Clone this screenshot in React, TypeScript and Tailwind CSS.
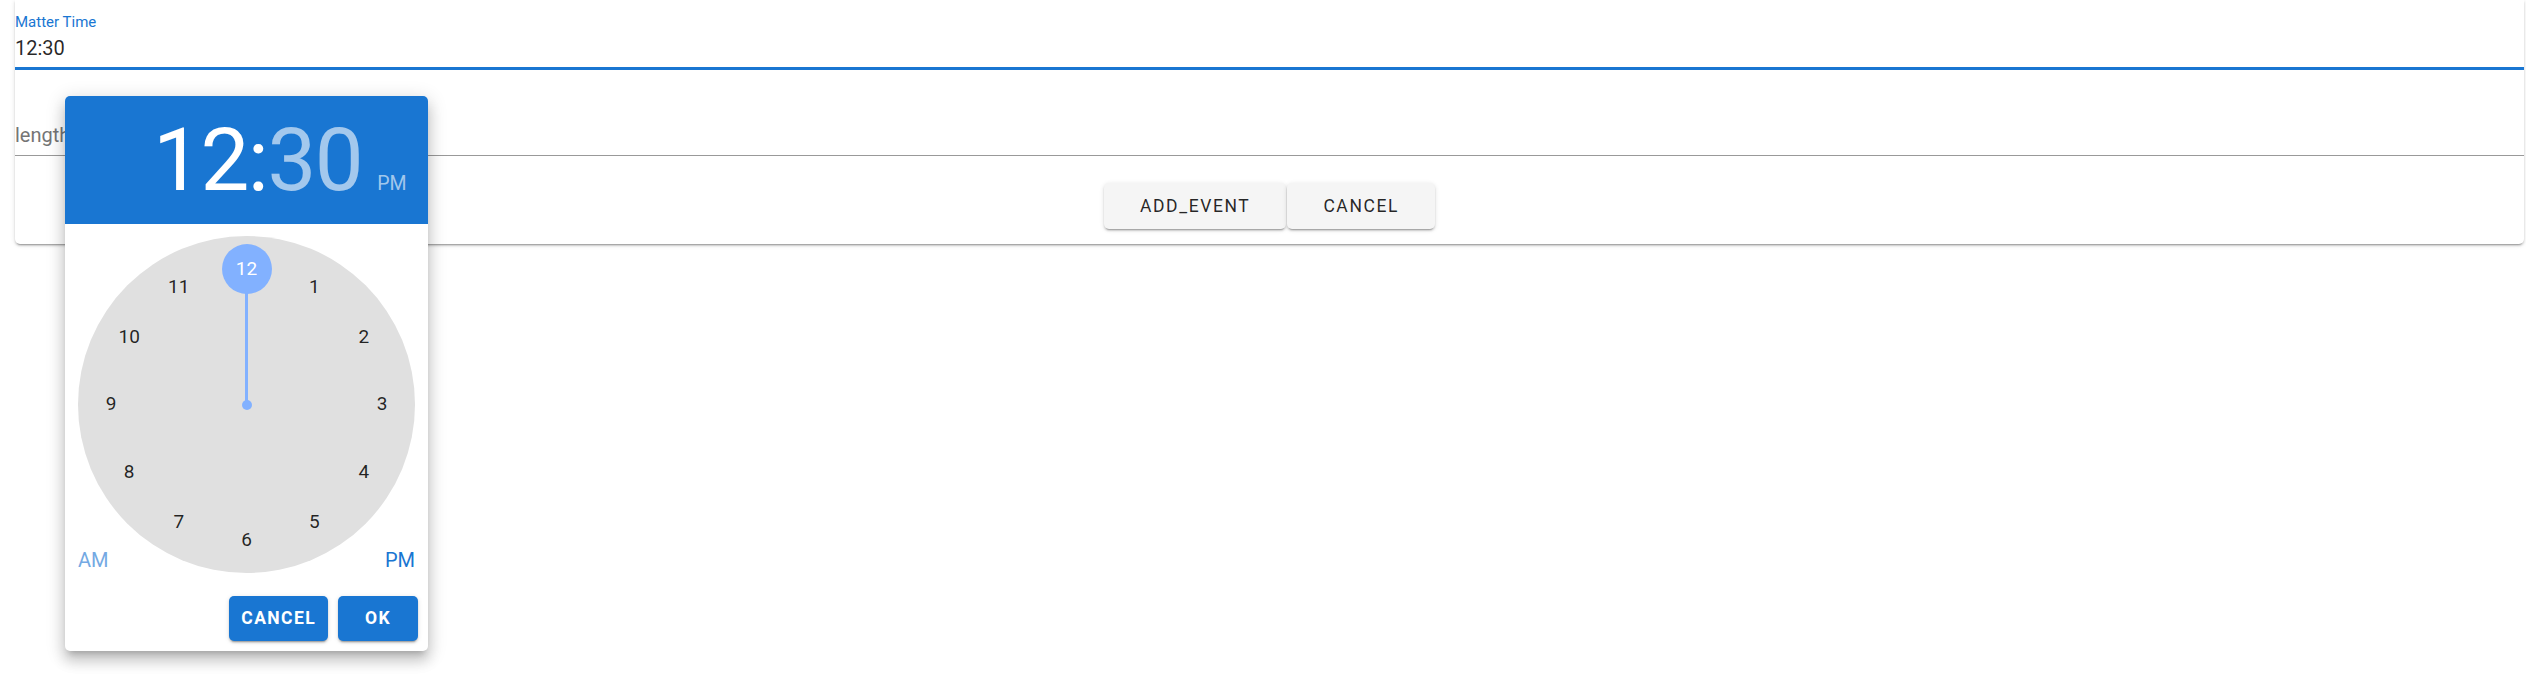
import React from "react";

const numbers = [12, 1, 2, 3, 4, 5, 6, 7, 8, 9, 10, 11];

const ClockFace = () => {
  const c = 168.5;
  const r = 135.5;
  return (
    <div className="relative w-[337px] h-[337px] mx-auto">
      <div className="absolute inset-0 rounded-full bg-[#e0e0e0]" />
      <div className="absolute left-[163.5px] top-[164px] w-[10px] h-[10px] rounded-full bg-[#82b1ff]" />
      <div className="absolute left-[167.25px] top-[34px] w-[2.5px] h-[135px] bg-[#82b1ff]" />
      {numbers.map((n) => {
        const a = (n % 12) * (Math.PI / 6);
        const x = c + r * Math.sin(a);
        const y = c - r * Math.cos(a);
        const selected = n === 12;
        return (
          <div
            key={n}
            className={
              selected
                ? "absolute w-[50px] h-[50px] -ml-[25px] -mt-[25px] rounded-full bg-[#82b1ff] flex items-center justify-center text-[19px] text-white"
                : "absolute w-[50px] h-[50px] -ml-[25px] -mt-[25px] flex items-center justify-center text-[19px] text-black/85"
            }
            style={{ left: x, top: y }}
          >
            {n}
          </div>
        );
      })}
      <span className="absolute left-0 top-[314px] text-[20px] leading-[20px] text-[#74a9e3]">AM</span>
      <span className="absolute right-0 top-[314px] text-[20px] leading-[20px] text-[#1976d2]">PM</span>
    </div>
  );
};

const TimePopup = () => {
  return (
    <div className="absolute left-[65px] top-[96px] w-[363px] bg-white rounded-[5px] overflow-hidden shadow-[0px_6px_6px_-4px_rgba(0,0,0,0.2),0px_10px_13px_1px_rgba(0,0,0,0.14),0px_4px_18px_3px_rgba(0,0,0,0.12)]">
      <div className="h-[128px] bg-[#1976d2] flex items-center pl-[88px]">
        <div className="flex items-baseline">
          <span className="text-[87px] leading-none font-normal tracking-[-1.5px] text-white">12:</span>
          <span className="text-[87px] leading-none font-normal tracking-[-1.5px] text-white/60">30</span>
          <span className="ml-[15px] text-[19.5px] text-white/60">PM</span>
        </div>
      </div>
      <div className="pt-[12px]">
        <ClockFace />
      </div>
      <div className="flex justify-end gap-[10px] pt-[23px] pr-[10px] pb-[10px]">
        <button className="h-[45px] px-[12px] min-w-[80px] rounded-[5px] bg-[#1976d2] text-white font-bold text-[17.5px] tracking-[1.4px] shadow-[0_3px_1px_-2px_rgba(0,0,0,0.2),0_2px_2px_0_rgba(0,0,0,0.14),0_1px_5px_0_rgba(0,0,0,0.12)]">
          CANCEL
        </button>
        <button className="h-[45px] px-[12px] min-w-[80px] rounded-[5px] bg-[#1976d2] text-white font-bold text-[17.5px] tracking-[1.4px] shadow-[0_3px_1px_-2px_rgba(0,0,0,0.2),0_2px_2px_0_rgba(0,0,0,0.14),0_1px_5px_0_rgba(0,0,0,0.12)]">
          OK
        </button>
      </div>
    </div>
  );
};

export default function App() {
  return (
    <div className="relative min-h-screen bg-white font-[Roboto,'Liberation_Sans',sans-serif]">
      <div className="ml-[15px] w-[2509px] bg-white rounded-b-[5px] shadow-[0_3px_1px_-2px_rgba(0,0,0,0.2),0_2px_2px_0_rgba(0,0,0,0.14),0_1px_5px_0_rgba(0,0,0,0.12)]">
        <div className="pt-[15px] border-b-[3px] border-[#1976d2]">
          <p className="text-[15px] leading-[15px] text-[#1976d2]">Matter Time</p>
          <p className="mt-[8px] pb-[9px] text-[20px] leading-[20px] text-black/85">12:30</p>
        </div>
        <div className="mt-[55px] pb-[10px] border-b border-black/40">
          <p className="text-[20px] leading-[20px] text-[#757575]">length</p>
        </div>
        <div className="flex justify-center gap-[1px] pt-[27px] pb-[15px]">
          {["ADD_EVENT", "CANCEL"].map((label) => (
            <button
              key={label}
              className="h-[46px] px-[36px] rounded-[5px] bg-[#f5f5f5] text-black/85 font-normal text-[17.5px] tracking-[1.6px] shadow-[0_3px_1px_-2px_rgba(0,0,0,0.2),0_2px_2px_0_rgba(0,0,0,0.14),0_1px_5px_0_rgba(0,0,0,0.12)]"
            >
              {label}
            </button>
          ))}
        </div>
      </div>
      <TimePopup />
    </div>
  );
}
